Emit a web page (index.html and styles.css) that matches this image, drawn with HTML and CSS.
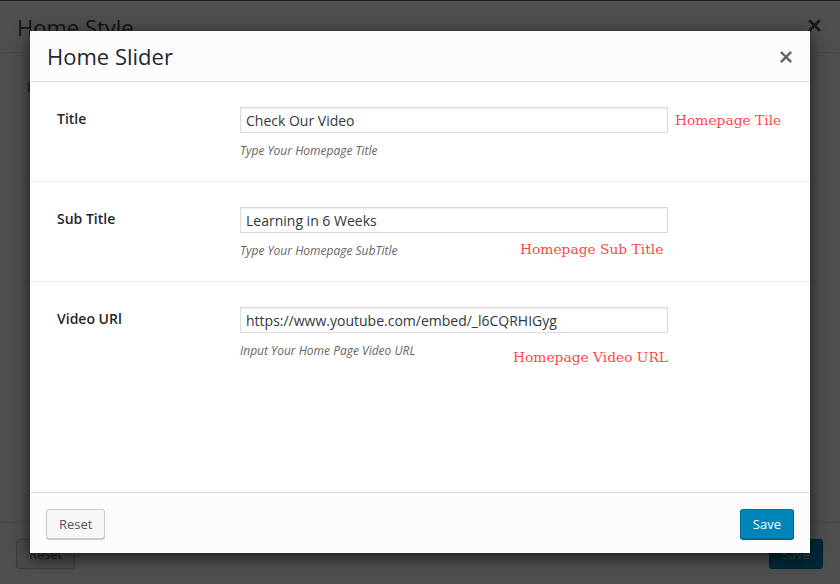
FILE: index.html
```html
<!DOCTYPE html>
<html lang="en">
<head>
<meta charset="utf-8">
<title>Home Slider</title>
<link rel="stylesheet" href="styles.css">
</head>
<body>
<div class="backdrop">
  <header class="bg-head">
    <h2 class="bg-title">Home Style</h2>
    <svg class="bg-x" width="13" height="13" viewBox="0 0 12 12"><path d="M2 2L10 10M10 2L2 10" stroke="currentColor" stroke-width="2.6" stroke-linecap="square"/></svg>
  </header>
  <main class="bg-body"><span class="bg-label">Page</span></main>
  <footer class="bg-foot">
    <button class="bg-btn">Reset</button>
    <button class="bg-btn bg-save">Save</button>
  </footer>
</div>

<div class="modal">
  <div class="m-head">
    <h1 class="m-title">Home Slider</h1>
    <button class="m-close" aria-label="Close">
      <svg width="12" height="12" viewBox="0 0 12 12"><path d="M1.8 1.8L10.2 10.2M10.2 1.8L1.8 10.2" stroke="currentColor" stroke-width="2.5" stroke-linecap="square"/></svg>
    </button>
  </div>
  <div class="m-body">
    <div class="row">
      <label class="lbl">Title</label>
      <div class="field">
        <input class="inp" type="text" value="Check Our Video">
        <p class="desc">Type Your Homepage Title</p>
      </div>
      <span class="note note1">Homepage Tile</span>
    </div>
    <div class="row">
      <label class="lbl">Sub Title</label>
      <div class="field">
        <input class="inp" type="text" value="Learning in 6 Weeks">
        <p class="desc">Type Your Homepage SubTitle</p>
      </div>
      <span class="note note2">Homepage Sub Title</span>
    </div>
    <div class="row last">
      <label class="lbl">Video URl</label>
      <div class="field">
        <input class="inp" type="text" value="https://www.youtube.com/embed/_l6CQRHIGyg">
        <p class="desc">Input Your Home Page Video URL</p>
      </div>
      <span class="note note3">Homepage Video URL</span>
    </div>
  </div>
  <div class="m-foot">
    <button class="btn">Reset</button>
    <button class="btn primary">Save</button>
  </div>
</div>
</body>
</html>
```

FILE: styles.css
```css
* { box-sizing: border-box; }
html, body { margin: 0; padding: 0; }
body {
  width: 840px;
  height: 584px;
  overflow: hidden;
  background: #4f4f4f;
  font-family: "Open Sans", "Noto Sans", sans-serif;
  position: relative;
}

/* dimmed page behind the modal */
.backdrop {
  height: 584px;
  display: flex;
  flex-direction: column;
  border-top: 1px solid #1c1c1c;
}
.bg-head {
  height: 52px;
  border-bottom: 1px solid #464646;
  display: flex;
  align-items: center;
  justify-content: space-between;
  padding: 0 19px 0 17px;
}
.bg-title {
  margin: 0;
  font-size: 22px;
  font-weight: 400;
  color: #141414;
  line-height: 50px;
}
.bg-x { color: #1a1a1a; margin-top: -2px; }
.bg-body { flex: 1; padding: 22px 0 0 27px; }
.bg-label { font-size: 14px; font-weight: 600; color: #1a1a1a; }
.bg-foot {
  height: 62px;
  border-top: 1px solid #464646;
  display: flex;
  justify-content: space-between;
  align-items: flex-start;
  padding: 16px 17px 0 16px;
}
.bg-btn {
  height: 30px;
  padding: 0 12px;
  font-family: inherit;
  font-size: 13px;
  color: #1c1c1c;
  background: #4b4b4b;
  border: 1px solid #3c3c3c;
  border-radius: 3px;
}
.bg-save {
  background: #00283a;
  border-color: #00222f;
  color: #3a4a52;
}

/* modal */
.modal {
  position: absolute;
  left: 30px;
  top: 31px;
  width: 780px;
  height: 522px;
  background: #fff;
  display: flex;
  flex-direction: column;
  box-shadow: 0 4px 16px rgba(0, 0, 0, 0.7);
}
.m-head {
  height: 51px;
  flex: none;
  background: #fcfcfc;
  border-bottom: 1px solid #ddd;
  display: flex;
  align-items: center;
  justify-content: space-between;
  padding: 0 18px 0 17px;
}
.m-title {
  margin: 0;
  font-size: 22px;
  font-weight: 400;
  line-height: 50px;
  color: #23282d;
}
.m-close {
  border: 0;
  background: none;
  padding: 0;
  width: 13px;
  height: 13px;
  color: #666;
  display: flex;
  align-items: center;
  justify-content: center;
  margin-top: 1px;
}
.m-body { flex: 1; }
.row {
  position: relative;
  height: 100px;
  border-bottom: 1px solid #eee;
  display: grid;
  grid-template-columns: 183px 428px;
  align-items: start;
  padding: 25px 27px 0;
}
.row.last { border-bottom: 0; }
.lbl {
  font-size: 14px;
  font-weight: 600;
  color: #23282d;
  line-height: 22px;
  padding-top: 1px;
}
.inp {
  display: block;
  width: 428px;
  height: 26px;
  margin: 0;
  padding: 0 5px;
  border: 1px solid #ddd;
  box-shadow: inset 0 1px 2px rgba(0, 0, 0, 0.07);
  font-family: inherit;
  font-size: 14px;
  color: #32373c;
  background: #fff;
  outline: none;
}
.desc {
  margin: 9px 0 0;
  font-size: 12px;
  line-height: 18px;
  font-style: italic;
  color: #666;
}
.note {
  position: absolute;
  font-family: "DejaVu Serif", "Liberation Serif", serif;
  font-size: 13.8px;
  line-height: 20px;
  color: #ff4747;
  white-space: nowrap;
}
.note1 { left: 645px; top: 28px; }
.note2 { left: 490px; top: 57px; }
.note3 { left: 483px; top: 65px; }

.m-foot {
  height: 61px;
  flex: none;
  background: #fcfcfc;
  border-top: 1px solid #ddd;
  display: flex;
  justify-content: space-between;
  align-items: flex-start;
  padding: 16px 16px 0;
}
.btn {
  height: 30px;
  padding: 0 12px;
  font-family: inherit;
  font-size: 13px;
  line-height: 28px;
  color: #555;
  background: #f7f7f7;
  border: 1px solid #ccc;
  border-radius: 3px;
  box-shadow: 0 1px 0 #ccc;
}
.btn.primary {
  background: #0085ba;
  border-color: #0073aa #006799 #006799;
  box-shadow: 0 1px 0 #006799;
  color: #fff;
}
```
